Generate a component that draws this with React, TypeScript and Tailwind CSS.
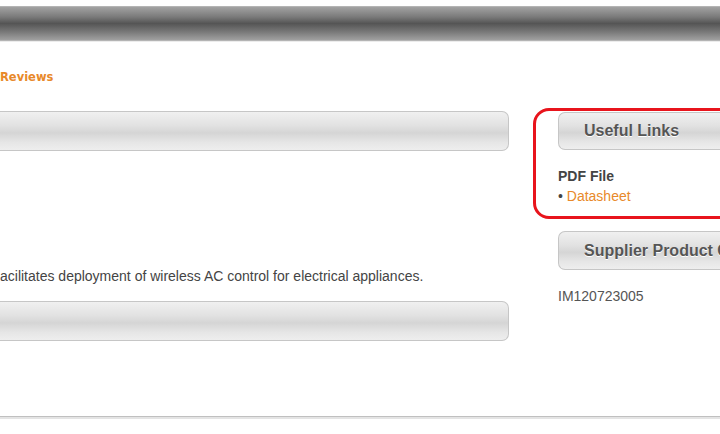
import React from 'react';

const barBg =
  'bg-[linear-gradient(to_bottom,#f0f0f0_0%,#e2e2e2_35%,#d5d5d5_55%,#e6e6e6_80%,#eeeeee_100%)]';

const SideButton: React.FC<{ label: string; className?: string }> = ({ label, className }) => (
  <div
    className={`h-[38px] flex items-center pl-[25px] rounded-l-[7px] border border-r-0 border-[#c6c6c6] ${barBg} ${className ?? ''}`}
  >
    <span className="text-[16px] font-bold text-[#555] whitespace-nowrap [text-shadow:0_1px_0_#fff]">{label}</span>
  </div>
);

export default function App() {
  return (
    <div className="w-[720px] h-[434px] overflow-hidden bg-white font-['Liberation_Sans',Arial,sans-serif]">
      <div className="h-[6px]" />
      <div className="h-[35px] border-t border-b border-[#b4b4b4] bg-[linear-gradient(to_bottom,#a2a2a2_0%,#7a7a7a_30%,#555555_50%,#787878_75%,#a0a0a0_100%)]" />
      <div className="h-px bg-[#ececec]" />

      <div className="mt-[27px] h-4 leading-4 text-[11.5px] font-bold text-[#e8892a] font-['DejaVu_Sans',Verdana,sans-serif]">
        Reviews
      </div>

      <div className="mt-[23px] flex">
        <div className="w-[509px] shrink-0 pt-[3px]">
          <div className={`h-[40px] rounded-r-[7px] border border-l-0 border-[#c6c6c6] ${barBg}`} />
          <p className="mt-[115px] h-5 leading-5 text-[14px] text-[#444] whitespace-nowrap">
            acilitates deployment of wireless AC control for electrical appliances.
          </p>
          <div className={`mt-[15px] h-[40px] rounded-r-[7px] border border-l-0 border-[#c6c6c6] ${barBg}`} />
        </div>

        <div className="ml-[24px] w-[240px] shrink-0">
          <div className="h-[111px] border-[3px] border-[#e8141c] rounded-[16px] pl-[22px] pt-px">
            <SideButton label="Useful Links" />
            <div className="mt-[16px] h-5 leading-5 text-[14px] font-bold text-[#444]">PDF File</div>
            <div className="h-5 leading-5 text-[14px] text-[#444]">
              • <span className="text-[#e8892a]">Datasheet</span>
            </div>
          </div>
          <div className="pl-[25px]">
            <SideButton label="Supplier Product Code" className="mt-[12px] h-[39px]" />
            <div className="mt-[16px] h-5 leading-5 text-[14px] text-[#555]">IM120723005</div>
          </div>
        </div>
      </div>

      <div className="mt-[75px] h-px bg-[#c0c0c0]" />
      <div className="h-[2px] bg-[#e4e4e4]" />
    </div>
  );
}
